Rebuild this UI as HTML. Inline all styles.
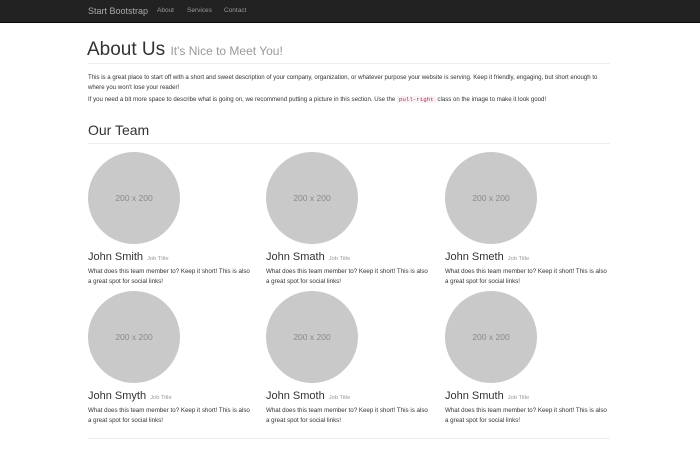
<!DOCTYPE html>
<html><head><style>
*{margin:0;padding:0;box-sizing:border-box}
body{width:700px;height:450px;background:#fff;font-family:"Liberation Sans",sans-serif;color:#333;position:relative;overflow:hidden}
.nav{position:absolute;left:0;top:0;width:700px;height:23px;background:#222;border-bottom:1px solid #080808}
.nav span{position:absolute;top:7px;font-size:6.5px;color:#999}
.nav .brand{font-size:9px;top:6px;color:#aaa}
.a{position:absolute;white-space:nowrap}
.hr{position:absolute;left:88px;width:522px;height:1px;background:#eee}
p.a{font-size:6.1px;color:#333}
code{font-family:"Liberation Mono",monospace;color:#c7254e;background:#f9f2f4;font-size:5.8px;padding:0 2px}
.c{position:absolute;width:92px;height:92px;border-radius:50%;background:#c9c9c9;color:#8a8a8a;font-size:8.5px;text-align:center;line-height:92px}
.n{position:absolute;font-size:11px;color:#333;white-space:nowrap}
.n small{font-size:5.8px;color:#999;margin-left:4px}
.d{position:absolute;font-size:6.2px;line-height:10px;width:164px;color:#333}
</style></head><body>
<div class="nav"><span class="brand" style="left:88px">Start Bootstrap</span><span style="left:157px">About</span><span style="left:187px">Services</span><span style="left:224px">Contact</span></div>
<div class="a" style="left:87px;top:39px;font-size:19px;color:#333">About Us <span style="font-size:12px;color:#999">It's Nice to Meet You!</span></div>
<div class="hr" style="top:63px"></div>
<p class="a" style="left:88px;top:73px;line-height:10px">This is a great place to start off with a short and sweet description of your company, organization, or whatever purpose your website is serving. Keep it friendly, engaging, but short enough to<br>where you won't lose your reader!</p>
<p class="a" style="left:88px;top:96px">If you need a bit more space to describe what is going on, we recommend putting a picture in this section. Use the <code>pull-right</code> class on the image to make it look good!</p>
<div class="a" style="left:88px;top:122px;font-size:14px">Our Team</div>
<div class="hr" style="top:143px"></div>
<div class="hr" style="top:438px"></div>

<div class="c" style="left:88px;top:152px">200 x 200</div>
<div class="c" style="left:266px;top:152px">200 x 200</div>
<div class="c" style="left:445px;top:152px">200 x 200</div>
<div class="c" style="left:88px;top:291px">200 x 200</div>
<div class="c" style="left:266px;top:291px">200 x 200</div>
<div class="c" style="left:445px;top:291px">200 x 200</div>

<div class="n" style="left:88px;top:251px">John Smith<small>Job Title</small></div>
<div class="n" style="left:266px;top:251px">John Smath<small>Job Title</small></div>
<div class="n" style="left:445px;top:251px">John Smeth<small>Job Title</small></div>
<div class="n" style="left:88px;top:390px">John Smyth<small>Job Title</small></div>
<div class="n" style="left:266px;top:390px">John Smoth<small>Job Title</small></div>
<div class="n" style="left:445px;top:390px">John Smuth<small>Job Title</small></div>

<div class="d" style="left:88px;top:267px">What does this team member to? Keep it short! This is also a great spot for social links!</div>
<div class="d" style="left:266px;top:267px">What does this team member to? Keep it short! This is also a great spot for social links!</div>
<div class="d" style="left:445px;top:267px">What does this team member to? Keep it short! This is also a great spot for social links!</div>
<div class="d" style="left:88px;top:406px">What does this team member to? Keep it short! This is also a great spot for social links!</div>
<div class="d" style="left:266px;top:406px">What does this team member to? Keep it short! This is also a great spot for social links!</div>
<div class="d" style="left:445px;top:406px">What does this team member to? Keep it short! This is also a great spot for social links!</div>
</body></html>
